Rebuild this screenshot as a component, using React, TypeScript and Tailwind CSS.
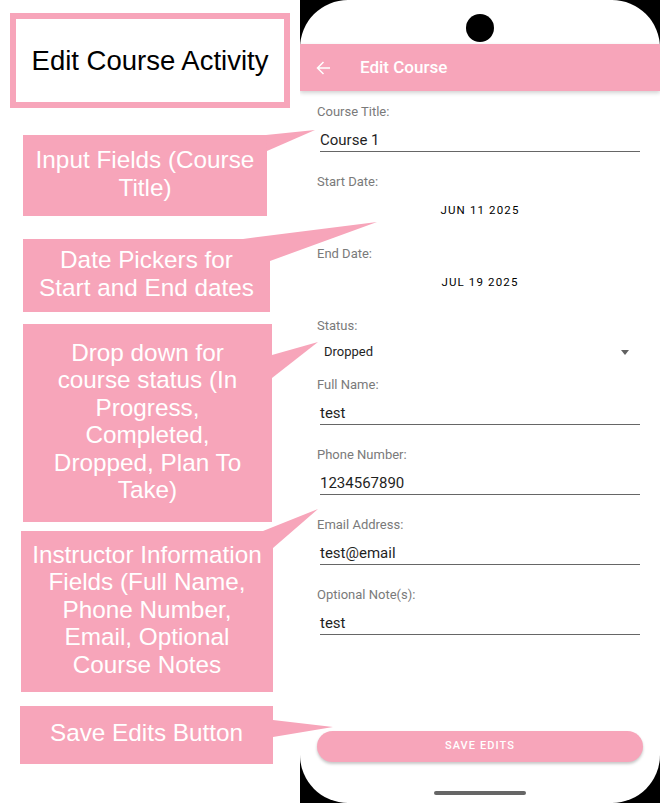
import { ReactNode } from "react";

const pink = "bg-[#f7a5ba]";

interface CalloutProps {
  className: string;
  children: ReactNode;
}

function Callout({ className, children }: CalloutProps) {
  return (
    <div
      className={`${pink} flex items-center justify-center pb-[4px] text-center text-white text-[24.3px] leading-[27.5px] ${className}`}
    >
      <div>{children}</div>
    </div>
  );
}

interface FieldProps {
  label: string;
  value: string;
  first?: boolean;
}

const labelCls = "h-[20px] leading-[20px] text-[13px] text-[#7a7a7a]";

function Field({ label, value, first }: FieldProps) {
  return (
    <div className={first ? "mt-[11px]" : "mt-[20px]"}>
      <div className={labelCls}>{label}</div>
      <div className="mt-[8px] ml-[3px] mr-[3px] h-[22px] leading-[21px] border-b border-[#666] text-[15px] text-[#1f1f1f]">
        {value}
      </div>
    </div>
  );
}

function DateButton({ value }: { value: string }) {
  return (
    <div className="mt-[1px] h-[36px] flex items-center justify-center text-[11.5px] font-normal tracking-[0.1em] text-black">
      {value}
    </div>
  );
}

export default function App() {
  return (
    <div className="relative w-[660px] h-[803px] flex bg-white overflow-hidden font-['Liberation_Sans',Arial,sans-serif]">
      {/* annotation column */}
      <div className="w-[300px] flex flex-col">
        <div className="mt-[13px] ml-[10px] w-[280px] h-[95px] border-[6px] border-[#f7a5ba] flex items-center justify-center text-[27.5px] text-black">
          Edit Course Activity
        </div>
        <Callout className="mt-[27px] ml-[23px] w-[244px] h-[81px]">
          Input Fields (Course
          <br />
          Title)
        </Callout>
        <Callout className="mt-[23px] ml-[23px] w-[247px] h-[73px]">
          Date Pickers for
          <br />
          Start and End dates
        </Callout>
        <Callout className="mt-[12px] ml-[23px] w-[249px] h-[198px]">
          Drop down for
          <br />
          course status (In
          <br />
          Progress,
          <br />
          Completed,
          <br />
          Dropped, Plan To
          <br />
          Take)
        </Callout>
        <Callout className="mt-[9px] ml-[21px] w-[252px] h-[161px]">
          Instructor Information
          <br />
          Fields (Full Name,
          <br />
          Phone Number,
          <br />
          Email, Optional
          <br />
          Course Notes
        </Callout>
        <Callout className="mt-[14px] ml-[20px] w-[253px] h-[58px]">Save Edits Button</Callout>
      </div>

      {/* phone */}
      <div className="w-[360px] h-[803px] bg-black">
        <div className="w-full h-full bg-white rounded-[48px] overflow-hidden flex flex-col font-['Roboto',sans-serif]">
          <div className="h-[44px] flex items-center justify-center">
            <div className="w-[28px] h-[28px] rounded-full bg-black mt-[12px]" />
          </div>
          <div className={`${pink} h-[47px] flex items-center shadow-[0_2px_4px_rgba(0,0,0,0.18)] relative`}>
            <svg width="15" height="14" viewBox="0 0 15 14" className="ml-[16px] mt-[1px]">
              <path d="M14 7H1.5M7.5 1 1.5 7l6 6" fill="none" stroke="white" strokeWidth="1.5" />
            </svg>
            <span className="ml-[29px] mt-[1px] text-white text-[17px] font-medium">Edit Course</span>
          </div>

          <div className="pl-[17px] pr-[17px] flex flex-col">
            <Field first label="Course Title:" value="Course 1" />

            <div className={`mt-[20px] ${labelCls}`}>Start Date:</div>
            <DateButton value="JUN 11 2025" />
            <div className={`mt-[15px] ${labelCls}`}>End Date:</div>
            <DateButton value="JUL 19 2025" />

            <div className={`mt-[15px] ${labelCls}`}>Status:</div>
            <div className="h-[32px] flex items-center justify-between pl-[7px] pr-[14px]">
              <span className="text-[13px] text-[#1f1f1f]">Dropped</span>
              <span className="w-0 h-0 border-l-[4px] border-r-[4px] border-t-[5px] border-l-transparent border-r-transparent border-t-[#616161]" />
            </div>

            <div className="mt-[-13px]">
              <Field label="Full Name:" value="test" />
            </div>
            <Field label="Phone Number:" value="1234567890" />
            <Field label="Email Address:" value="test@email" />
            <Field label="Optional Note(s):" value="test" />

            <div
              className={`${pink} mt-[96px] h-[31px] rounded-full flex items-center justify-center text-white text-[11px] font-medium tracking-[0.1em] shadow-[0_2px_3px_rgba(0,0,0,0.22)]`}
            >
              SAVE EDITS
            </div>
          </div>
          <div className="mt-[29px] mx-auto w-[92px] h-[4px] rounded-full bg-[#666]" />
        </div>
      </div>

      {/* callout pointers */}
      <svg className="absolute inset-0 pointer-events-none" width="660" height="803">
        <g fill="#f7a5ba">
          <polygon points="266,135 315,130 267,151" />
          <polygon points="243,239 377,222 270,261 270,239" />
          <polygon points="272,355 318,342 272,378" />
          <polygon points="263,531 318,509 273,548 273,531" />
          <polygon points="273,720 333,727 273,737" />
        </g>
      </svg>
    </div>
  );
}
